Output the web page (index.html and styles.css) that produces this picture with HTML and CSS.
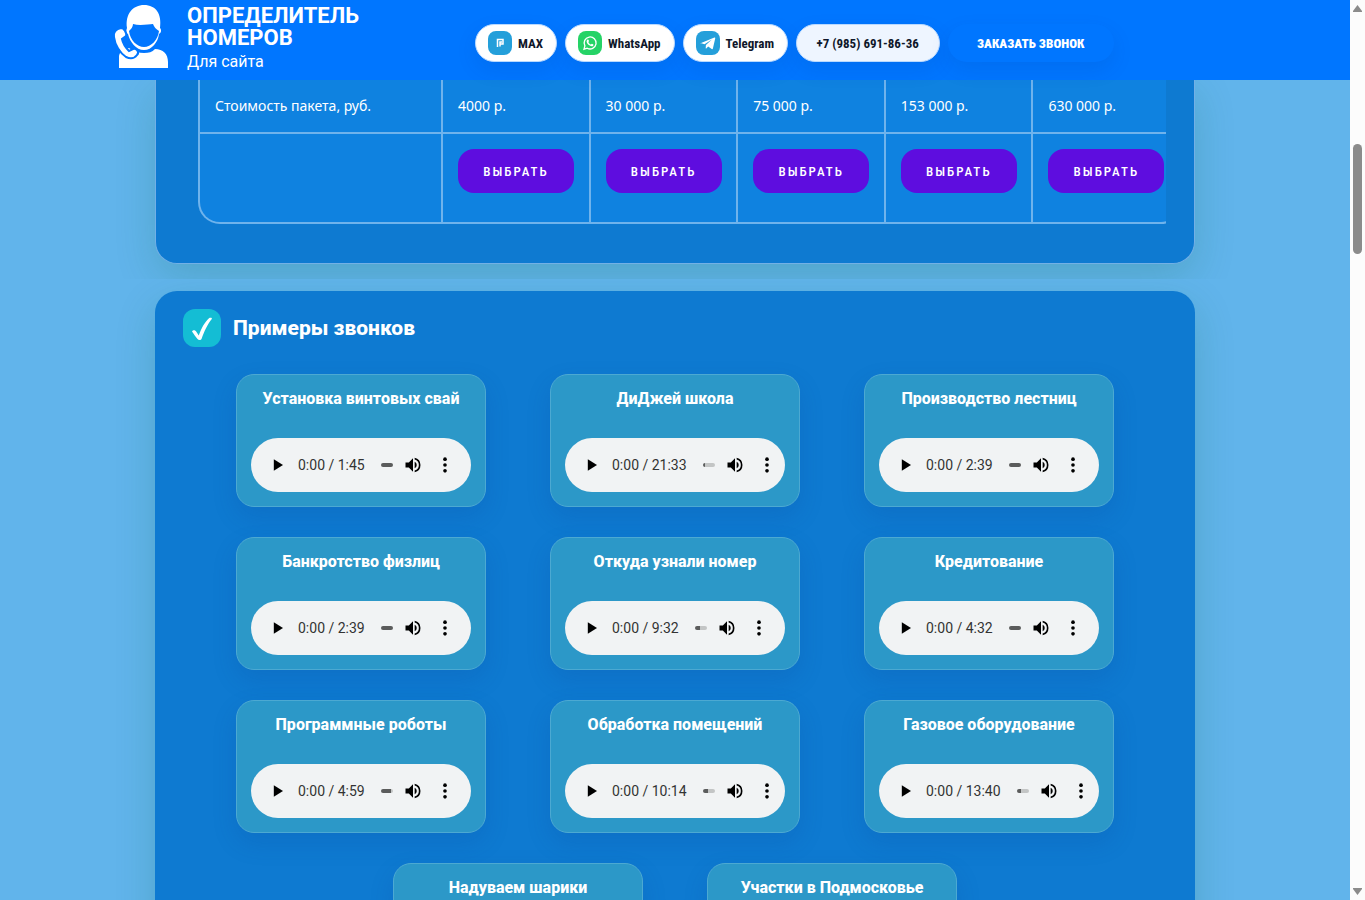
FILE: index.html
```html
<!DOCTYPE html>
<html lang="ru">
<head>
  <meta charset="UTF-8">
  <meta name="viewport" content="width=device-width, initial-scale=1.0">
  <title>Определитель номеров для сайта</title>
  <link rel="stylesheet" href="styles.css">
</head>
<body>
  <svg class="sprite" aria-hidden="true">
    <symbol id="i-play" viewBox="0 0 24 24"><path d="M7 5v14l11-7z"/></symbol>
    <symbol id="i-volume" viewBox="0 0 24 24"><path d="M3 9v6h4l5 5V4L7 9H3zm13.500 3A4.500 4.500 0 0 0 14 7.970v8.050A4.470 4.470 0 0 0 16.500 12zM14 3.230v2.060a7 7 0 0 1 0 13.420v2.060a9 9 0 0 0 0-17.540z"/></symbol>
    <symbol id="i-more" viewBox="0 0 24 24"><circle cx="12" cy="5" r="2.200"/><circle cx="12" cy="12" r="2.200"/><circle cx="12" cy="19" r="2.200"/></symbol>
  </svg>

  <div class="page">
    <header class="header">
      <div class="header-inner">
        <a class="brand" href="#">
          <svg class="brand-logo" viewBox="0 0 54 66" fill="#fff">
            <path d="M13 30C11 29 11 26 12 24C10 10 18 1 29 1C41 1 47 10 45 24C47 26 46 29 44 30C43 38 37 46 29 46C21 46 15 38 13 30Z"/>
            <path fill="#0076ff" d="M14 27C16 25 18 23 18 20C25 22 34 20 38 20C39 23 41 25 44 27C43 36 36 43 29 43C22 43 15 36 14 27Z"/>
            <path d="M4 64V53C4 48 8 45 14 44C19 48 24 49 29 49C34 49 37 48 40 45C48 45 53 50 53 58V64Z"/>
            <path stroke="#0076ff" stroke-width="2" d="M-1 33C-2 28 1 25 6 24C9 24 12 29 11 32L7 35C8 40 11 44 14 47L18 45C21 44 25 48 22 51C19 55 15 55 11 53C5 49 0 41 -1 33Z"/>
          </svg>
          <span class="brand-text">
            <strong>ОПРЕДЕЛИТЕЛЬ НОМЕРОВ</strong>
            <span>Для сайта</span>
          </span>
        </a>
        <nav class="contacts">
          <a class="pill" href="#">
            <span class="pill-icon">
              <svg viewBox="0 0 24 24" fill="none" stroke="#fff" stroke-width="1.500"><path d="M9.500 16V8.500H15v4.500h-2.500M12 15.500V11h2"/></svg>
            </span>MAX</a>
          <a class="pill" href="#">
            <span class="pill-icon pill-icon-wa">
              <svg viewBox="0 0 24 24" fill="none" stroke="#fff" stroke-width="1.300"><path d="M6 18.200l.9-3.300a6 6 0 1 1 2.300 2.300z"/><path fill="#fff" stroke="none" d="M9.300 8.700c.5-.4 1-.3 1.200.2l.5 1.200c.1.300-.5.800-.6 1.100.6 1.200 1.400 1.900 2.600 2.400.4-.2.700-.9 1-.8l1.400.7c.2.900-.5 1.900-1.700 1.800-2.500-.3-5.200-3-5.100-5 0-.6.300-1.200.7-1.600z"/></svg>
            </span>WhatsApp</a>
          <a class="pill" href="#">
            <span class="pill-icon">
              <svg viewBox="0 0 24 24" fill="#fff"><path d="M4.500 12.200L18.400 6.600c.6-.2 1 .1.800.9l-2.300 10.100c-.2.700-.6.900-1.200.5l-3.500-2.500-1.700 1.600c-.5.500-.8.300-.8-.3l.2-2.800 6-5.500-7.400 4.600-3.900-1.100z"/></svg>
            </span>Telegram</a>
          <a class="pill pill-phone" href="tel:+79856918636">+7 (985) 691-86-36</a>
          <button class="pill pill-call" type="button">ЗАКАЗАТЬ ЗВОНОК</button>
        </nav>
      </div>
    </header>

    <main>
      <div class="band band-prices">
        <section class="panel panel-prices">
          <div class="table-scroll">
            <div class="table-box">
              <table class="prices">
                <tr>
                  <th scope="row">Стоимость пакета, руб.</th>
                  <td>4000 р.</td>
                  <td>30 000 р.</td>
                  <td>75 000 р.</td>
                  <td>153 000 р.</td>
                  <td>630 000 р.</td>
                </tr>
                <tr class="prices-actions">
                  <td></td>
                  <td><button class="choose" type="button">ВЫБРАТЬ</button></td>
                  <td><button class="choose" type="button">ВЫБРАТЬ</button></td>
                  <td><button class="choose" type="button">ВЫБРАТЬ</button></td>
                  <td><button class="choose" type="button">ВЫБРАТЬ</button></td>
                  <td><button class="choose" type="button">ВЫБРАТЬ</button></td>
                </tr>
              </table>
            </div>
          </div>
        </section>
      </div>

      <div class="band band-calls">
        <section class="panel panel-calls">
          <h2 class="panel-title">
            <span class="check">
              <svg viewBox="0 0 38 38" fill="#fff"><path d="M9 22.500C10 20.500 12.500 21 13.500 23L15.800 26.500C18 20 22 12.500 26 9.300C27 8.500 29.500 8.700 28.800 10C24.500 15 21 23 18.700 29.500C18 31.500 15.500 31.500 14.500 30C12.500 27.500 11 25.500 9 22.500Z"/></svg>
            </span>
            Примеры звонков
          </h2>
          <div class="calls" id="calls"></div>
        </section>
      </div>
    </main>
  </div>

  <div class="scrollbar" aria-hidden="true">
    <svg class="scroll-arrow" viewBox="0 0 9 7"><path d="M4.500 0L9 6v1H0V6z"/></svg>
    <span class="scroll-thumb"></span>
    <svg class="scroll-arrow scroll-arrow-down" viewBox="0 0 9 7"><path d="M4.500 7L0 1V0h9v1z"/></svg>
  </div>

  <script>
    // title, duration, buffered part in percent
    const calls = [
      ['Установка винтовых свай', '1:45', 100],
      ['ДиДжей школа', '21:33', 15],
      ['Производство лестниц', '2:39', 100],
      ['Банкротство физлиц', '2:39', 100],
      ['Откуда узнали номер', '9:32', 40],
      ['Кредитование', '4:32', 100],
      ['Программные роботы', '4:59', 85],
      ['Обработка помещений', '10:14', 40],
      ['Газовое оборудование', '13:40', 30],
      ['Надуваем шарики', '3:12', 100],
      ['Участки в Подмосковье', '2:48', 100]
    ];

    document.getElementById('calls').innerHTML = calls.map(([title, time, buffered]) => `
      <article class="call">
        <h3>${title}</h3>
        <div class="player">
          <button type="button" aria-label="Воспроизвести"><svg><use href="#i-play"/></svg></button>
          <span class="time">0:00 / ${time}</span>
          <input type="range" min="0" max="100" value="0" aria-label="Позиция: ${title}" style="--buffered: ${buffered}%">
          <button type="button" aria-label="Громкость"><svg><use href="#i-volume"/></svg></button>
          <button type="button" aria-label="Ещё"><svg><use href="#i-more"/></svg></button>
        </div>
      </article>`).join('');
  </script>
</body>
</html>
```
FILE: styles.css
```css
* {
  box-sizing: border-box;
}
body {
  margin: 0;
  height: 100vh;
  display: flex;
  overflow: hidden;
  font-family: Roboto, Arial, sans-serif;
  color: #fff;
  background: #61b4eb;
}
a {
  color: inherit;
  text-decoration: none;
}
button {
  border: 0;
  font-family: inherit;
  cursor: pointer;
}
.sprite {
  display: none;
}
.page {
  flex: 1;
  min-width: 0;
  overflow: hidden;
}

/* header */
.header {
  height: 80px;
  background: #0076ff;
}
.header-inner {
  max-width: 1120px;
  margin: 0 auto;
  display: flex;
  align-items: flex-start;
}
.brand {
  width: 360px;
  padding-top: 4px;
  display: flex;
  gap: 18px;
}
.brand-logo {
  flex: none;
  width: 54px;
  height: 66px;
  overflow: visible;
}
.brand-text {
  display: flex;
  flex-direction: column;
  max-width: 190px;
  padding-top: 1px;
  font-size: 16px;
  line-height: 26px;
}
.brand-text strong {
  font-size: 22px;
  line-height: 22px;
}
.contacts {
  display: flex;
  gap: 8px;
  padding-top: 24px;
}
.pill {
  display: flex;
  align-items: center;
  justify-content: center;
  gap: 6px;
  height: 38px;
  padding: 0 13px 0 12px;
  border: 1px solid #b8d9ff;
  border-radius: 19px;
  background: #fff;
  color: #0f172a;
  font-family: "Roboto Condensed", Roboto, sans-serif;
  font-size: 13px;
  font-weight: 700;
  white-space: nowrap;
  box-shadow: 0 8px 20px rgba(2, 60, 140, 0.12);
}
.pill-icon {
  width: 24px;
  height: 24px;
  border-radius: 8px;
  background: #249fda;
}
.pill-icon-wa {
  background: #25d366;
}
.pill-icon svg {
  display: block;
}
.pill-phone {
  min-width: 144px;
  background: #eef5ff;
}
.pill-call {
  min-width: 166px;
  border: 0;
  background: #0076ff;
  color: #fff;
  font-weight: 900;
}

/* panels */
.band {
  overflow: hidden;
}
.band-prices {
  padding-bottom: 15px;
}
.band-calls {
  padding: 12px 0 40px;
}
.panel {
  max-width: 1040px;
  margin: 0 auto;
  background: #0e7ad1;
  box-shadow: 0 14px 40px rgba(20, 110, 70, 0.2);
}
.panel-prices {
  padding: 0 28px 39px 42px;
  border: 1px solid #72b0e6;
  border-top: 0;
  border-radius: 0 0 22px 22px;
}
.panel-calls {
  padding: 18px 28px 40px;
  border-radius: 22px;
}

/* price table */
.table-scroll {
  overflow: hidden;
}
.table-box {
  width: 985px;
  border: 2px solid #6fb3ec;
  border-top: 0;
  border-radius: 0 0 22px 22px;
  background: #0f82e0;
  overflow: hidden;
}
.prices {
  width: 100%;
  table-layout: fixed;
  border-spacing: 0;
  font-family: "Noto Sans", sans-serif;
  font-size: 14px;
  line-height: 22px;
}
.prices th,
.prices td {
  padding: 15px;
  border-right: 2px solid #6fb3ec;
  border-bottom: 2px solid #6fb3ec;
  font-weight: 400;
  text-align: left;
}
.prices th {
  width: 243px;
}
.prices td:last-child {
  border-right: 0;
}
.prices .prices-actions td {
  padding-bottom: 29px;
  border-bottom: 0;
}
.choose {
  display: block;
  width: 116px;
  height: 44px;
  padding: 0;
  border-radius: 16px;
  background: #5e0ddf;
  color: #fff;
  font-family: "Roboto Condensed", Roboto, sans-serif;
  font-size: 13px;
  font-weight: 500;
  letter-spacing: 2px;
}

/* call examples */
.panel-title {
  display: flex;
  align-items: center;
  gap: 12px;
  margin: 0 0 27px;
  font-size: 21px;
  font-weight: 800;
  line-height: 38px;
}
.check {
  width: 38px;
  height: 38px;
  border-radius: 12px;
  background: #14bdd4;
}
.check svg {
  display: block;
}
.calls {
  display: flex;
  flex-wrap: wrap;
  justify-content: center;
  gap: 30px 64px;
}
.call {
  width: 250px;
  padding: 14px;
  border: 1px solid #4ca9d2;
  border-radius: 18px;
  background: #2c98c8;
  box-shadow: 0 10px 24px rgba(10, 60, 140, 0.16);
}
.call h3 {
  margin: 0 0 29px;
  font-size: 16px;
  font-weight: 800;
  line-height: 20px;
  text-align: center;
}
.player {
  display: flex;
  align-items: center;
  height: 54px;
  padding-left: 11px;
  border-radius: 27px;
  background: #f1f3f4;
  overflow: hidden;
}
.player button {
  flex: none;
  display: flex;
  justify-content: center;
  width: 32px;
  padding: 0;
  background: none;
}
.player svg {
  width: 20px;
  height: 20px;
}
.player .time {
  margin: 0 16px 0 4px;
  color: #333;
  font-size: 14px;
  white-space: nowrap;
}
.player input {
  flex: none;
  appearance: none;
  width: 12px;
  height: 4px;
  margin: 0 4px 0 0;
  border-radius: 2px;
  background: linear-gradient(to right, #5b5c5c var(--buffered), #c3c5c5 var(--buffered));
}
.player input::-webkit-slider-thumb {
  appearance: none;
  width: 0;
  height: 0;
}

/* scrollbar strip */
.scrollbar {
  width: 15px;
  padding: 5px 3px;
  display: flex;
  flex-direction: column;
  background: #fcfcfc;
}
.scroll-arrow {
  width: 9px;
  height: 7px;
  fill: #8b8b8b;
}
.scroll-arrow-down {
  margin-top: auto;
}
.scroll-thumb {
  height: 110px;
  margin-top: 132px;
  border-radius: 5px;
  background: #8b8b8b;
}
```
